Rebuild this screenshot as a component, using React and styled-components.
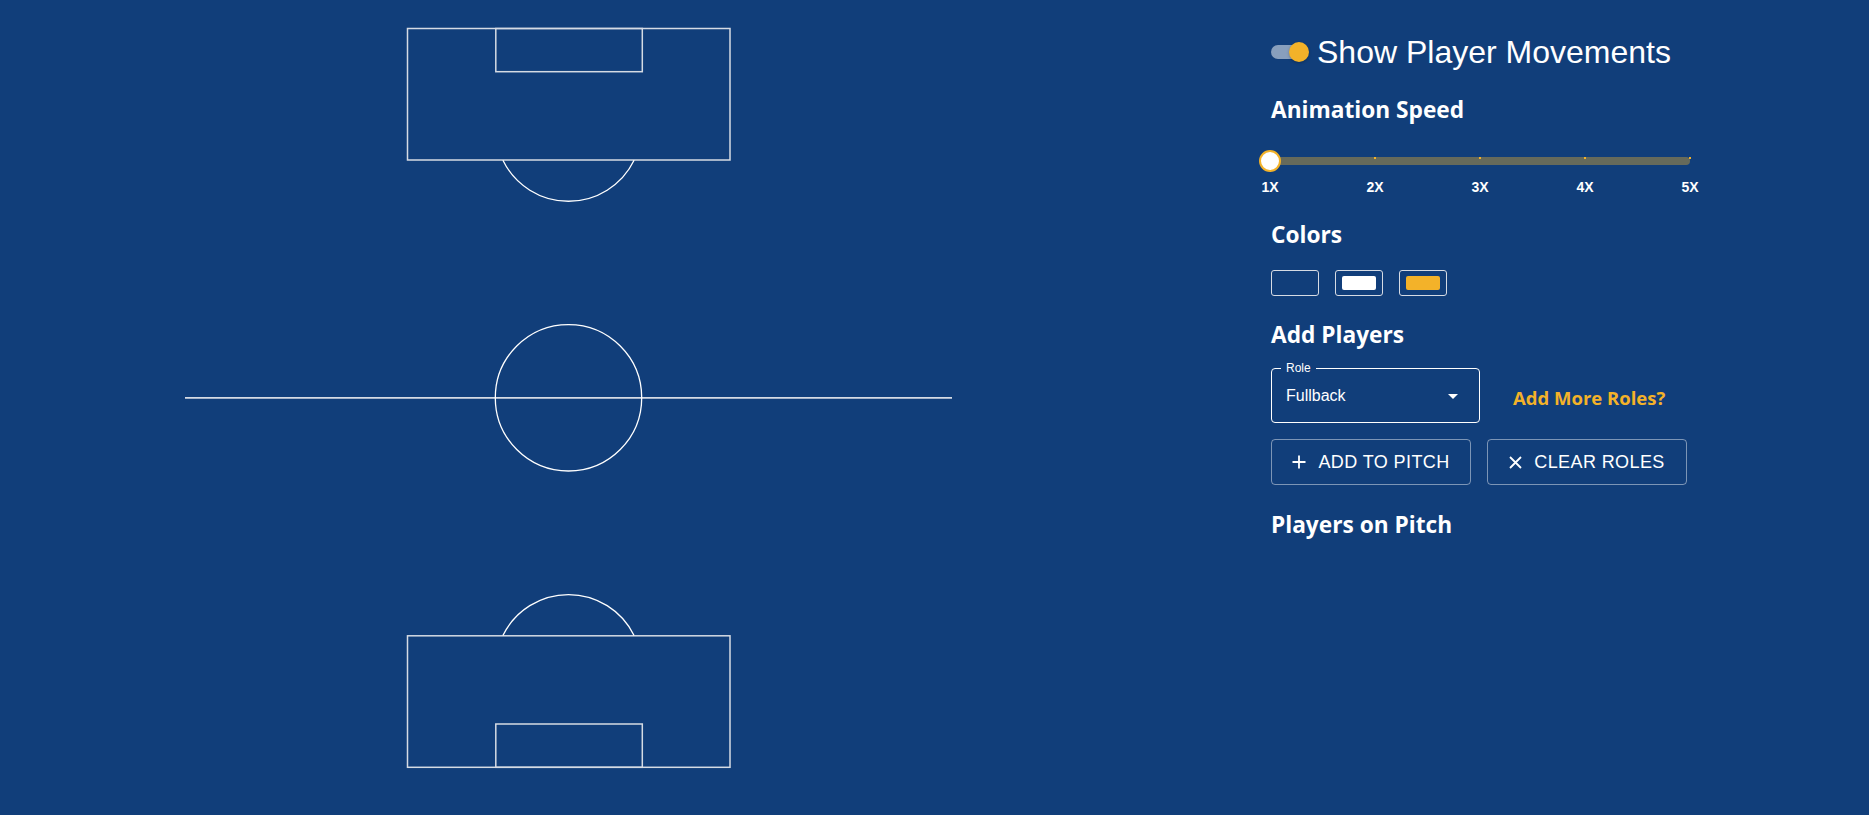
import React, { useState } from "react";
import styled, { createGlobalStyle } from "styled-components";

const BG = "#113e7a";
const YELLOW = "#f3b229";

const Global = createGlobalStyle`
  html, body { margin: 0; padding: 0; background: ${BG}; }
  body { font-family: "Liberation Sans", Arial, sans-serif; color: #fff; }
  * { box-sizing: border-box; }
`;

const Page = styled.div`
  display: flex;
  width: 100%;
  min-height: 815px;
  background: ${BG};
`;

const PitchArea = styled.div`
  flex: 0 0 1137px;
  display: flex;
  justify-content: center;
`;

const PitchSvg = styled.svg`
  display: block;
  width: 767px;
  height: 815px;
`;

const Panel = styled.div`
  flex: 1;
  display: flex;
  flex-direction: column;
  align-items: flex-start;
  padding-left: 134px;
  padding-top: 32px;
`;

const ToggleRow = styled.label`
  display: flex;
  align-items: center;
  height: 40px;
  gap: 8px;
  cursor: pointer;
`;

const SwitchBox = styled.span`
  position: relative;
  width: 38px;
  height: 20px;
  display: inline-block;
`;

const SwitchTrack = styled.span`
  position: absolute;
  left: 0;
  top: 3px;
  width: 34px;
  height: 14px;
  border-radius: 7px;
  background: ${(p) => (p.$on ? "rgba(255,255,255,0.5)" : "rgba(255,255,255,0.3)")};
`;

const SwitchThumb = styled.span`
  position: absolute;
  top: 0;
  left: ${(p) => (p.$on ? "18px" : "0")};
  width: 20px;
  height: 20px;
  border-radius: 50%;
  background: ${(p) => (p.$on ? YELLOW : "#fafafa")};
  box-shadow: 0 1px 3px rgba(0, 0, 0, 0.25);
`;

const ToggleText = styled.span`
  font-family: "Liberation Sans", Arial, sans-serif;
  font-size: 32px;
  line-height: 40px;
  color: #fff;
`;

const Heading = styled.h2`
  margin: ${(p) => p.$mt || 0}px 0 0 0;
  font-family: "Open Sans", "Noto Sans", sans-serif;
  font-weight: 700;
  font-size: 22.7px;
  line-height: 32px;
  color: #fff;
`;

const SliderWrap = styled.div`
  position: relative;
  width: 420px;
  height: 56px;
  margin-top: 11px;
  margin-left: -1px;
`;

const Rail = styled.div`
  position: absolute;
  left: 0;
  right: 0;
  top: 20px;
  height: 8px;
  border-radius: 4px;
  background: rgba(243, 178, 41, 0.38);
`;

const Mark = styled.span`
  position: absolute;
  top: 20px;
  width: 2px;
  height: 2px;
  margin-left: -1px;
  background: ${YELLOW};
`;

const Thumb = styled.span`
  position: absolute;
  top: 13px;
  width: 22px;
  height: 22px;
  margin-left: -11px;
  border-radius: 50%;
  background: #fff;
  border: 2px solid ${YELLOW};
`;

const MarkLabel = styled.span`
  position: absolute;
  top: 42px;
  transform: translateX(-50%);
  font-family: "Liberation Sans", Arial, sans-serif;
  font-weight: 700;
  font-size: 14px;
  line-height: 16px;
  color: #fff;
`;

const Swatches = styled.div`
  display: flex;
  gap: 16px;
  margin-top: 19px;
`;

const Swatch = styled.button`
  width: 48px;
  height: 26px;
  padding: 5px 6px;
  border: 1px solid #d6dbe4;
  border-radius: 3px;
  background: transparent;
  cursor: pointer;
  display: flex;
`;

const SwatchFill = styled.span`
  flex: 1;
  border-radius: 2px;
  background: ${(p) => p.$color};
`;

const SelectRow = styled.div`
  display: flex;
  align-items: center;
  gap: 33px;
  margin-top: 17px;
`;

const SelectBox = styled.div`
  position: relative;
  width: 209px;
  height: 55px;
  border: 1px solid #fff;
  border-radius: 4px;
  display: flex;
  align-items: center;
  padding: 0 14px;
`;

const SelectLegend = styled.span`
  position: absolute;
  top: -8px;
  left: 9px;
  padding: 0 5px;
  background: ${BG};
  font-family: "Liberation Sans", Arial, sans-serif;
  font-size: 12px;
  line-height: 14px;
  color: #fff;
`;

const SelectValue = styled.span`
  flex: 1;
  font-family: "Liberation Sans", Arial, sans-serif;
  font-size: 16px;
  color: #fff;
`;

const LinkText = styled.a`
  font-family: "Open Sans", "Noto Sans", sans-serif;
  font-weight: 700;
  font-size: 18.5px;
  color: ${YELLOW};
  text-decoration: none;
  cursor: pointer;
  margin-top: 3px;
`;

const ButtonRow = styled.div`
  display: flex;
  gap: 16px;
  margin-top: 16px;
`;

const OutlineButton = styled.button`
  width: 200px;
  height: 46px;
  display: flex;
  align-items: center;
  justify-content: center;
  gap: 12px;
  border: 1px solid rgba(255, 255, 255, 0.45);
  border-radius: 4px;
  background: transparent;
  color: #fff;
  font-family: "Liberation Sans", Arial, sans-serif;
  font-size: 18px;
  letter-spacing: 0.4px;
  text-transform: uppercase;
  cursor: pointer;
  padding: 0;
`;

const PlusIcon = () => (
  <svg width="14" height="14" viewBox="0 0 14 14">
    <path d="M7 0.5v13M0.5 7h13" stroke="#fff" strokeWidth="1.8" fill="none" />
  </svg>
);

const XIcon = () => (
  <svg width="13" height="13" viewBox="0 0 13 13">
    <path d="M1 1l11 11M12 1L1 12" stroke="#fff" strokeWidth="1.8" fill="none" />
  </svg>
);

const Caret = () => (
  <svg width="24" height="24" viewBox="0 0 24 24">
    <path d="M7 10l5 5 5-5z" fill="#fff" />
  </svg>
);

const LINE = "#d6dbe4";

function Pitch() {
  const cx = 383.5;
  return (
    <PitchSvg viewBox="0 0 767 815">
      <g fill="none">
        <rect x="222.5" y="28.5" width="322.5" height="131.5" stroke={LINE} strokeWidth="1.5" />
        <rect x="310.8" y="28.5" width="146.5" height="43.2" stroke={LINE} strokeWidth="1.5" />
        <path d={`M ${cx - 65.6} 160.3 A 73 73 0 0 0 ${cx + 65.6} 160.3`} stroke="#fff" strokeWidth="1.3" />
        <line x1="0" y1="397.8" x2="767" y2="397.8" stroke={LINE} strokeWidth="1.8" />
        <circle cx={cx} cy="397.8" r="73.2" stroke="#fff" strokeWidth="1.3" />
        <rect x="222.5" y="635.8" width="322.5" height="131.5" stroke={LINE} strokeWidth="1.5" />
        <rect x="310.8" y="724" width="146.5" height="43.3" stroke={LINE} strokeWidth="1.5" />
        <path d={`M ${cx - 65.6} 635.5 A 73 73 0 0 1 ${cx + 65.6} 635.5`} stroke="#fff" strokeWidth="1.3" />
      </g>
    </PitchSvg>
  );
}

const marks = [1, 2, 3, 4, 5];

export default function App() {
  const [on, setOn] = useState(true);
  const [speed] = useState(1);
  const swatches = [BG, "#ffffff", YELLOW];
  return (
    <>
      <Global />
      <Page>
        <PitchArea>
          <Pitch />
        </PitchArea>
        <Panel>
          <ToggleRow onClick={() => setOn(!on)}>
            <SwitchBox>
              <SwitchTrack $on={on} />
              <SwitchThumb $on={on} />
            </SwitchBox>
            <ToggleText>Show Player Movements</ToggleText>
          </ToggleRow>

          <Heading $mt={22}>Animation Speed</Heading>
          <SliderWrap>
            <Rail />
            {marks.map((m) => (
              <Mark key={m} style={{ left: `${((m - 1) / 4) * 100}%` }} />
            ))}
            <Thumb style={{ left: `${((speed - 1) / 4) * 100}%` }} />
            {marks.map((m) => (
              <MarkLabel key={m} style={{ left: `${((m - 1) / 4) * 100}%` }}>
                {m}X
              </MarkLabel>
            ))}
          </SliderWrap>

          <Heading $mt={26}>Colors</Heading>
          <Swatches>
            {swatches.map((c) => (
              <Swatch key={c}>
                <SwatchFill $color={c} />
              </Swatch>
            ))}
          </Swatches>

          <Heading $mt={23}>Add Players</Heading>
          <SelectRow>
            <SelectBox>
              <SelectLegend>Role</SelectLegend>
              <SelectValue>Fullback</SelectValue>
              <Caret />
            </SelectBox>
            <LinkText>Add More Roles?</LinkText>
          </SelectRow>

          <ButtonRow>
            <OutlineButton>
              <PlusIcon />
              Add to Pitch
            </OutlineButton>
            <OutlineButton>
              <XIcon />
              Clear Roles
            </OutlineButton>
          </ButtonRow>

          <Heading $mt={24}>Players on Pitch</Heading>
        </Panel>
      </Page>
    </>
  );
}
